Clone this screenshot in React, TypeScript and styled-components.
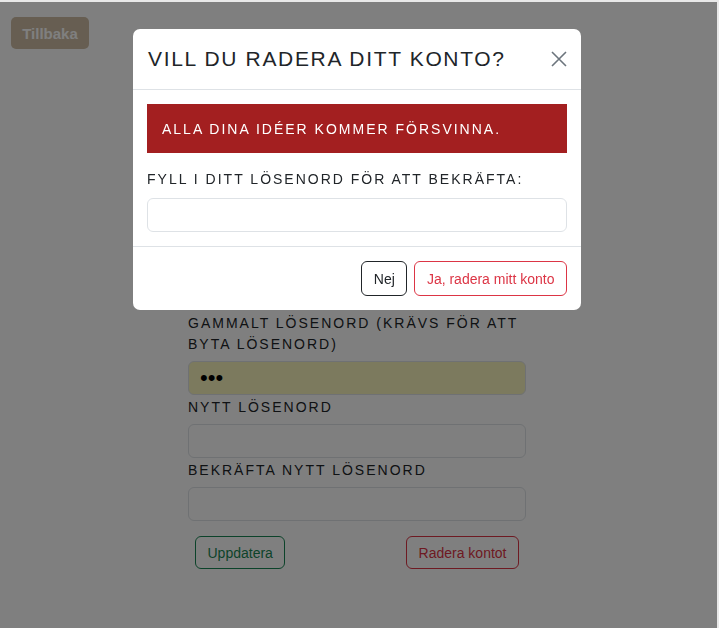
import React from "react";
import styled, { createGlobalStyle } from "styled-components";

const Global = createGlobalStyle`
  html, body { margin: 0; padding: 0; background: #e8e8e8; }
  body { font-family: "Liberation Sans", Arial, sans-serif; color: #212529; }
  * { box-sizing: border-box; }
`;

const Page = styled.div`
  margin: 2px 2px 0 0;
  min-height: 626px;
  background: #ffffff;
  padding: 15px 14px 40px 11px;
`;

const BackButton = styled.button`
  display: block;
  width: 78px;
  height: 32px;
  border: none;
  border-radius: 5px;
  background: #cebca4;
  color: #ffffff;
  font-family: "Liberation Sans", Arial, sans-serif;
  font-size: 15px;
  font-weight: bold;
  cursor: pointer;
`;

const Form = styled.form`
  width: 338px;
  margin: 0 auto;
  padding-top: 264px;
  display: flex;
  flex-direction: column;
`;

const Label = styled.label`
  display: block;
  font-size: 14px;
  line-height: 21px;
  letter-spacing: 2px;
  text-transform: uppercase;
  color: #212529;
  margin-bottom: 6px;
`;

const Input = styled.input<{ $autofill?: boolean }>`
  display: block;
  width: 100%;
  height: 34px;
  border: 1px solid #dee2e6;
  border-radius: 6px;
  background: ${(p) => (p.$autofill ? "#f8f4bc" : "#ffffff")};
  padding: 0 11px;
  font-size: ${(p) => (p.$autofill ? "22px" : "16px")};
  font-family: "Liberation Sans", Arial, sans-serif;
  color: #000;
  margin-bottom: 2px;
`;

const ButtonRow = styled.div`
  display: flex;
  justify-content: space-between;
  padding: 0 7px;
  margin-top: 13px;
`;

const OutlineButton = styled.button<{ $color: string; $h?: number }>`
  height: ${(p) => p.$h ?? 33}px;
  padding: 0 11.5px;
  border: 1px solid ${(p) => p.$color};
  border-radius: 6px;
  background: transparent;
  color: ${(p) => p.$color};
  font-family: "Liberation Sans", Arial, sans-serif;
  font-size: 14px;
  cursor: pointer;
`;

const Overlay = styled.div`
  position: fixed;
  top: 2px;
  left: 0;
  right: 2px;
  bottom: 0;
  background: rgba(0, 0, 0, 0.5);
  display: flex;
  justify-content: center;
  align-items: flex-start;
  padding: 27px 3px 0 0;
`;

const Modal = styled.div`
  width: 448px;
  background: #ffffff;
  border-radius: 7px;
  display: flex;
  flex-direction: column;
`;

const ModalHeader = styled.div`
  display: flex;
  align-items: center;
  justify-content: space-between;
  height: 61px;
  padding: 0 14px 0 15px;
  border-bottom: 1px solid #dee2e6;
`;

const Title = styled.h2`
  margin: 0;
  font-size: 21px;
  font-weight: normal;
  letter-spacing: 1.65px;
  text-transform: uppercase;
  color: #212529;
`;

const CloseButton = styled.button`
  width: 16px;
  height: 16px;
  padding: 0;
  border: none;
  background: transparent;
  display: flex;
  align-items: center;
  justify-content: center;
  cursor: pointer;
`;

const ModalBody = styled.div`
  padding: 14px;
  border-bottom: 1px solid #dee2e6;
  display: flex;
  flex-direction: column;
`;

const Alert = styled.div`
  height: 49px;
  background: #a31f20;
  color: #ffffff;
  font-size: 14px;
  letter-spacing: 2px;
  text-transform: uppercase;
  display: flex;
  align-items: center;
  padding: 0 15px;
  margin-bottom: 16px;
`;

const ModalLabel = styled(Label)`
  margin-bottom: 8px;
`;

const ModalInput = styled(Input)`
  margin-bottom: 0;
`;

const ModalFooter = styled.div`
  display: flex;
  justify-content: flex-end;
  gap: 7px;
  padding: 14px;
`;

export default function App() {
  return (
    <>
      <Global />
      <Page>
        <BackButton type="button">Tillbaka</BackButton>
        <Form>
          <Label>Gammalt lösenord (krävs för att byta lösenord)</Label>
          <Input type="password" defaultValue="abc" $autofill />
          <Label>Nytt lösenord</Label>
          <Input type="password" />
          <Label>Bekräfta nytt lösenord</Label>
          <Input type="password" />
          <ButtonRow>
            <OutlineButton type="button" $color="#198754">Uppdatera</OutlineButton>
            <OutlineButton type="button" $color="#dc3545">Radera kontot</OutlineButton>
          </ButtonRow>
        </Form>
      </Page>
      <Overlay>
        <Modal>
          <ModalHeader>
            <Title>Vill du radera ditt konto?</Title>
            <CloseButton type="button" aria-label="Stäng">
              <svg width="16" height="16" viewBox="0 0 16 16">
                <path d="M1 1L15 15M15 1L1 15" stroke="#6c757d" strokeWidth="1.6" />
              </svg>
            </CloseButton>
          </ModalHeader>
          <ModalBody>
            <Alert>Alla dina idéer kommer försvinna.</Alert>
            <ModalLabel>Fyll i ditt lösenord för att bekräfta:</ModalLabel>
            <ModalInput type="password" />
          </ModalBody>
          <ModalFooter>
            <OutlineButton type="button" $color="#212529" $h={35}>Nej</OutlineButton>
            <OutlineButton type="button" $color="#dc3545" $h={35}>Ja, radera mitt konto</OutlineButton>
          </ModalFooter>
        </Modal>
      </Overlay>
    </>
  );
}
